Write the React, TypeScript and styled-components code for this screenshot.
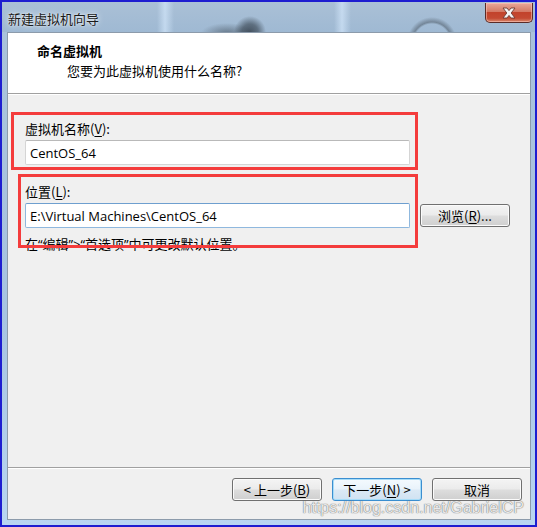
import styled, { createGlobalStyle } from 'styled-components'

const GlobalStyle = createGlobalStyle`
  html, body {
    margin: 0;
    padding: 0;
    background: #ffffff;
  }
  body {
    font-family: "Open Sans", "Noto Sans CJK SC", sans-serif;
    font-size: 13px;
    color: #000;
  }
`

const cjk = `"Noto Sans CJK SC", "Open Sans", sans-serif`
const mixed = `"Open Sans", "Noto Sans CJK SC", sans-serif`

const Frame = styled.div`
  position: relative;
  box-sizing: border-box;
  width: 537px;
  height: 527px;
  border: 2px solid #1d1dd0;
  display: flex;
  flex-direction: column;
  background: linear-gradient(180deg, #a9c2da 0%, #a7c4e2 60%, #b8d6f2 100%);
  overflow: hidden;
`

const TitleBar = styled.div`
  height: 30px;
  flex: none;
  display: flex;
  align-items: flex-start;
  justify-content: space-between;
  padding-left: 6px;
  padding-right: 2px;
  background:
    radial-gradient(circle at 248px 30px, rgba(40, 50, 60, 0.75) 0, rgba(40, 50, 60, 0.55) 8px, rgba(60, 70, 80, 0) 16px),
    radial-gradient(ellipse 26px 10px at 225px 31px, rgba(50, 60, 70, 0.5) 0, rgba(50, 60, 70, 0) 100%),
    radial-gradient(circle at 430px 40px, rgba(0, 0, 0, 0) 0, rgba(0, 0, 0, 0) 18px, rgba(60, 70, 80, 0.45) 20px, rgba(60, 70, 80, 0) 25px),
    linear-gradient(90deg, rgba(255, 255, 255, 0) 155px, rgba(210, 230, 250, 0.7) 163px, rgba(255, 255, 255, 0) 172px),
    linear-gradient(90deg, rgba(255, 255, 255, 0) 332px, rgba(210, 230, 250, 0.7) 340px, rgba(255, 255, 255, 0) 349px),
    linear-gradient(180deg, #aac0d6 0%, #9fb9d3 100%);
`

const TitleText = styled.span`
  margin-top: 8px;
  font-family: ${cjk};
  font-size: 13px;
  line-height: 17px;
  color: #1a1a1a;
  text-shadow: 0 0 6px rgba(255, 255, 255, 0.9), 0 0 2px rgba(255, 255, 255, 0.8);
`

const CloseButton = styled.div`
  width: 48px;
  height: 20px;
  margin-top: 1px;
  box-sizing: border-box;
  border: 1px solid #5a2b27;
  border-top: none;
  border-radius: 0 0 5px 5px;
  background: linear-gradient(180deg, #e9a99a 0%, #d47a65 45%, #c2432b 50%, #c44a32 80%, #d88a6e 100%);
  box-shadow: inset 0 0 0 1px rgba(255, 200, 190, 0.55);
  display: flex;
  align-items: center;
  justify-content: center;
`

const Client = styled.div`
  flex: 1;
  margin: 0 4px 5px 5px;
  border: 1px solid #8c9bab;
  display: flex;
  flex-direction: column;
  background: #f0f0f0;
`

const Header = styled.div`
  height: 61px;
  flex: none;
  box-sizing: border-box;
  background: #ffffff;
  border-bottom: 1px solid #a0a0a0;
  padding: 9px 0 0 29px;
  display: flex;
  flex-direction: column;
`

const HeaderTitle = styled.div`
  font-family: ${cjk};
  font-weight: 700;
  font-size: 13px;
  line-height: 18px;
`

const HeaderSub = styled.div`
  margin: 2px 0 0 30px;
  font-family: ${cjk};
  font-size: 13px;
  line-height: 18px;
`

const Body = styled.div`
  position: relative;
  flex: 1;
  padding: 25px 0 0 17px;
  display: flex;
  flex-direction: column;
  border-top: 1px solid #ffffff;
`

const Label = styled.div<{ $gap?: number }>`
  font-family: ${cjk};
  font-size: 13px;
  line-height: 17px;
  margin-top: ${({ $gap }) => $gap ?? 0}px;
  margin-bottom: 3px;

  & u {
    text-decoration-thickness: 1px;
    text-underline-offset: 2px;
  }
`

const Row = styled.div`
  display: flex;
  align-items: center;
  gap: 10px;
`

const TextBox = styled.div<{ $focused?: boolean }>`
  width: 385px;
  height: 25px;
  box-sizing: border-box;
  background: #ffffff;
  border: 1px solid ${({ $focused }) => ($focused ? '#8fb8de' : '#d5d5d5')};
  border-top-color: ${({ $focused }) => ($focused ? '#6e9fcf' : '#b9b9b9')};
  border-radius: 2px;
  padding: 0 4px;
  display: flex;
  align-items: center;
  font-family: "Open Sans", sans-serif;
  font-size: 13px;
  color: #000;
`

const Hint = styled.div`
  margin-top: 8px;
  font-family: ${mixed};
  font-size: 13px;
  line-height: 17px;
`

const Button = styled.div<{ $primary?: boolean }>`
  width: 90px;
  height: 23px;
  box-sizing: border-box;
  border: 1px solid ${({ $primary }) => ($primary ? '#3b8ed0' : '#707070')};
  border-radius: 3px;
  background: ${({ $primary }) =>
    $primary
      ? 'linear-gradient(180deg, #f4fafe 0%, #e9f3fb 48%, #dbe9f5 52%, #d0e2f2 100%)'
      : 'linear-gradient(180deg, #f4f4f4 0%, #ebebeb 48%, #dddddd 52%, #cfcfcf 100%)'};
  box-shadow: inset 0 0 0 1px ${({ $primary }) => ($primary ? '#a6dcf8' : '#fbfbfb')};
  display: flex;
  align-items: center;
  justify-content: center;
  font-family: ${cjk};
  font-size: 13px;
  color: #000;

  & u {
    text-underline-offset: 2px;
  }
`

const Annotation = styled.div<{ $top: number; $left: number; $w: number; $h: number }>`
  position: absolute;
  top: ${({ $top }) => $top}px;
  left: ${({ $left }) => $left}px;
  width: ${({ $w }) => $w}px;
  height: ${({ $h }) => $h}px;
  box-sizing: border-box;
  border: 3px solid #f43c3c;
  pointer-events: none;
`

const Footer = styled.div`
  position: relative;
  height: 41px;
  flex: none;
  border-top: 1px solid #a0a0a0;
  box-shadow: inset 0 1px 0 #ffffff;
  display: flex;
  justify-content: flex-end;
  align-items: flex-start;
  padding: 10px 8px 0 0;
  gap: 10px;
`

const Watermark = styled.div`
  position: absolute;
  right: 6px;
  bottom: 2px;
  font-family: "Liberation Sans", Arial, sans-serif;
  font-size: 16px;
  line-height: 18px;
  color: rgba(255, 255, 255, 0.85);
  text-shadow:
    0 0 1px rgba(110, 110, 110, 0.9),
    0 0 1px rgba(110, 110, 110, 0.9);
  pointer-events: none;
  white-space: nowrap;
`

function CloseIcon() {
  return (
    <svg width="16" height="12" viewBox="0 0 16 12">
      <path
        d="M2 1 H6 L8 3.6 L10 1 H14 L10.2 6 L14 11 H10 L8 8.4 L6 11 H2 L5.8 6 Z"
        fill="#f4f4f4"
        stroke="#6e3a32"
        strokeWidth="0.9"
        strokeLinejoin="round"
      />
    </svg>
  )
}

export default function App() {
  return (
    <>
      <GlobalStyle />
      <Frame>
        <TitleBar>
          <TitleText>新建虚拟机向导</TitleText>
          <CloseButton>
            <CloseIcon />
          </CloseButton>
        </TitleBar>
        <Client>
          <Header>
            <HeaderTitle>命名虚拟机</HeaderTitle>
            <HeaderSub>您要为此虚拟机使用什么名称?</HeaderSub>
          </Header>
          <Body>
            <Label>
              虚拟机名称(<u>V</u>):
            </Label>
            <TextBox>CentOS_64</TextBox>
            <Label $gap={18}>
              位置(<u>L</u>):
            </Label>
            <Row>
              <TextBox $focused>E:\Virtual Machines\CentOS_64</TextBox>
              <Button>
                浏览(<u>R</u>)...
              </Button>
            </Row>
            <Hint>在“编辑”&gt;“首选项”中可更改默认位置。</Hint>
            <Annotation $top={17} $left={3} $w={407} $h={58} />
            <Annotation $top={79} $left={10} $w={400} $h={74} />
          </Body>
          <Footer>
            <Button>
              &lt; 上一步(<u>B</u>)
            </Button>
            <Button $primary>
              下一步(<u>N</u>) &gt;
            </Button>
            <Button>取消</Button>
            <Watermark>https://blog.csdn.net/GabrielCP</Watermark>
          </Footer>
        </Client>
      </Frame>
    </>
  )
}
